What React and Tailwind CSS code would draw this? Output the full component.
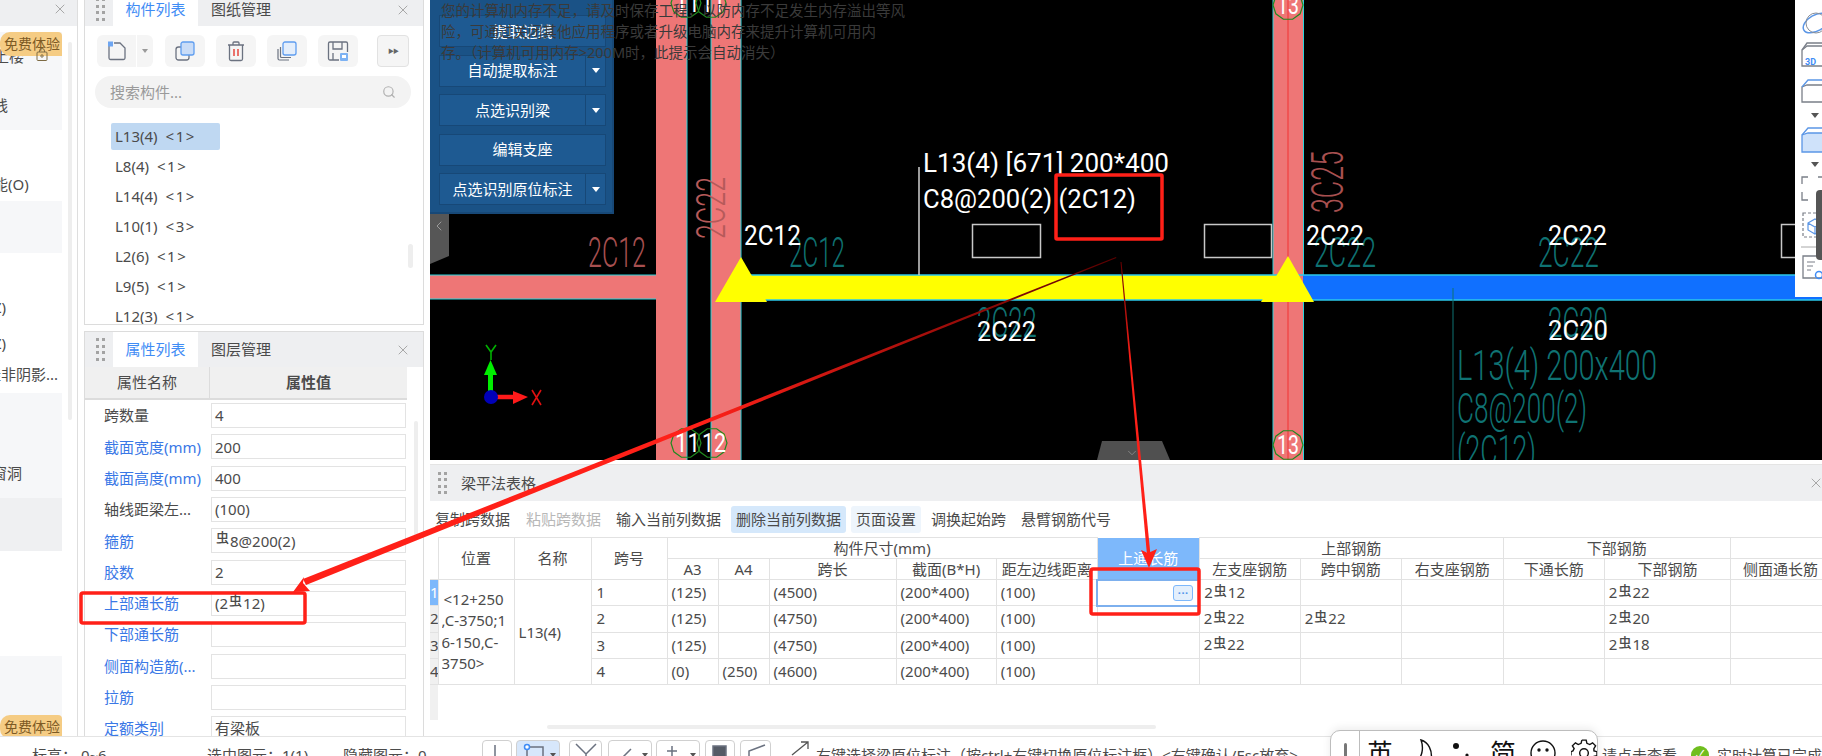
import { X, Search, ChevronLeft, ChevronDown } from "lucide-react";

const PINK = "#ee7676";
const CYAN = "#2bd4dc";
const TEAL = "#0f7272";
const DARK_PINK = "#a85050";

function Grip() {
    return (
        <div className="grid w-[9px] grid-cols-2 gap-x-[3px] gap-y-[3.5px]">
            {[0, 1, 2, 3, 4, 5, 6, 7].map((i) => (
                <span key={i} className="h-[3px] w-[3px] bg-[#a3a3a3]" />
            ))}
        </div>
    );
}

// 钢筋符号
function Bar() {
    return <span className="relative -top-[3px] mx-[1px] text-[13px] font-medium">虫</span>;
}

function PanelHeader({ active, other, height, lift = "" }) {
    return (
        <div className={`flex shrink-0 items-center bg-[#eeeff1] ${height}`}>
            <div className={`flex w-[28px] justify-center pl-[3px] ${lift}`}>
                <Grip />
            </div>
            <div className={`flex h-full w-[85px] items-center justify-center bg-white text-[15px] text-[#3f8cf5] ${lift}`}>{active}</div>
            <div className={`ml-[13px] text-[15px] text-[#4b4b4b] ${lift}`}>{other}</div>
            <div className={`ml-auto mr-[12px] ${lift}`}>
                <X className="h-[16px] w-[16px] text-[#a8a8a8]" strokeWidth={1.5} />
            </div>
        </div>
    );
}

function ToolBtn({ children, w = "w-[40px]" }) {
    return <div className={`flex h-[32px] items-center justify-center rounded-[6px] bg-[#f5f5f5] ${w}`}>{children}</div>;
}

function LeftStub() {
    const Badge = () => (
        <div className="absolute left-0 w-[62px] overflow-hidden whitespace-nowrap rounded-l-[10px] rounded-tr-[4px] bg-[#f5cc84] pl-[4px] text-[14px] leading-[24px] text-[#7d5a24]">
            免费体验
        </div>
    );
    return (
        <div className="relative flex w-[78px] shrink-0 flex-col border-r border-[#dedede] text-[15px] text-[#4b4b4b]">
            <div className="flex h-[26px] shrink-0 justify-end bg-[#eeeff1] pr-[9px] pt-[1px]">
                <X className="h-[16px] w-[16px] text-[#a8a8a8]" strokeWidth={1.5} />
            </div>
            <div className="flex">
                <div className="w-[62px] overflow-hidden">
                    <div className="h-[6px]" />
                    <div className="h-[98px] bg-[#f6f7f9] pt-[12px]">
                        <div className="-ml-[6px] h-[24px] leading-[24px]">上楼</div>
                        <div className="-ml-[7px] mt-[26px]">线</div>
                    </div>
                    <div className="h-[71px] pt-[44px]">
                        <div className="-ml-[7px] whitespace-nowrap leading-[20px]">能(O)</div>
                    </div>
                    <div className="h-[52px] bg-[#f6f7f9]" />
                    <div className="h-[140px] pt-[44px]">
                        <div className="-ml-[7px] leading-[20px]">Z)</div>
                        <div className="-ml-[7px] mt-[16px] leading-[20px]">Z)</div>
                        <div className="-ml-[14px] mt-[11px] whitespace-nowrap leading-[20px]">挂非阴影...</div>
                    </div>
                    <div className="h-[105px] bg-[#f6f7f9] pt-[70px]">
                        <div className="-ml-[8px] whitespace-nowrap leading-[20px]">窗洞</div>
                    </div>
                    <div className="h-[53px] bg-[#eff0f2]" />
                    <div className="h-[105px]" />
                    <div className="h-[80px] bg-[#f6f7f9]" />
                </div>
                <div className="ml-[6px] mt-[16px] h-[378px] w-[4px] rounded-full bg-[#eeeeee]" />
            </div>
            <div className="absolute top-[32px] left-0 w-[62px]">
                <Badge />
            </div>
            <div className="absolute top-[715px] left-0 h-[21px] w-[62px] overflow-hidden">
                <Badge />
            </div>
            <svg className="absolute top-[48px] left-[36px]" width="12" height="13" viewBox="0 0 12 13" fill="none" stroke="#7d6a44" strokeWidth="1">
                <path d="M3.5 4V3a2.5 2.5 0 0 1 5 0v1" />
                <rect x="1" y="4" width="10" height="8.5" rx="1" />
                <circle cx="6" cy="8" r="1.2" />
            </svg>
        </div>
    );
}

function ComponentPanel() {
    const items = ["L13(4)|<1>", "L8(4)|<1>", "L14(4)|<1>", "L10(1)|<3>", "L2(6)|<1>", "L9(5)|<1>", "L12(3)|<1>"];
    return (
        <div className="relative flex h-[325px] flex-col overflow-hidden border-x border-b border-[#dcdcdc]">
            <PanelHeader active="构件列表" other="图纸管理" height="h-[26px]" lift="pb-[7px]" />
            <div className="ml-[12px] mt-[9px] flex shrink-0">
                <div className="flex h-[32px] w-[56px] rounded-[6px] bg-[#f5f5f5]">
                    <div className="flex w-[40px] items-center justify-center border-r border-white">
                        <svg width="22" height="22" viewBox="0 0 22 22" fill="none" stroke="#6b7280" strokeWidth="1.3">
                            <path d="M3 6v12a1.5 1.5 0 0 0 1.5 1.5h13A1.5 1.5 0 0 0 19 18V8l-5-5H8" />
                            <rect x="2" y="1.5" width="5" height="5" fill="#6ea6f2" stroke="none" />
                        </svg>
                    </div>
                    <div className="flex flex-1 items-center justify-center">
                        <span className="h-0 w-0 border-x-[3.5px] border-t-[4px] border-x-transparent border-t-[#9a9a9a]" />
                    </div>
                </div>
                <div className="ml-[12px] flex gap-[11px]">
                    <ToolBtn>
                        <svg width="22" height="22" viewBox="0 0 22 22" fill="none">
                            <rect x="2" y="7" width="13" height="13" rx="2.5" stroke="#6b7280" strokeWidth="1.3" />
                            <rect x="7" y="2" width="13" height="13" rx="2" fill="#c9dcf7" stroke="#5f9df0" strokeWidth="1.3" />
                        </svg>
                    </ToolBtn>
                    <ToolBtn>
                        <svg width="20" height="22" viewBox="0 0 20 22" fill="none" stroke="#6b7280" strokeWidth="1.3">
                            <path d="M2 5h16M7 5V3a1 1 0 0 1 1-1h4a1 1 0 0 1 1 1v2M3.5 5v14a1.5 1.5 0 0 0 1.5 1.5h10a1.5 1.5 0 0 0 1.5-1.5V5" />
                            <path d="M8 9v7M12 9v7" stroke="#e8524a" strokeWidth="1.6" />
                        </svg>
                    </ToolBtn>
                    <ToolBtn>
                        <svg width="22" height="22" viewBox="0 0 22 22" fill="none">
                            <path d="M2 9v9.5a1.5 1.5 0 0 0 1.5 1.5H13M4.5 7v9.5a1 1 0 0 0 1 1H15" stroke="#6b7280" strokeWidth="1.2" />
                            <rect x="7" y="2" width="13" height="13" rx="2" fill="#e4eefb" stroke="#5f9df0" strokeWidth="1.3" />
                        </svg>
                    </ToolBtn>
                    <ToolBtn>
                        <svg width="22" height="22" viewBox="0 0 22 22" fill="none">
                            <path d="M12 20H3a1.5 1.5 0 0 1-1.5-1.5v-15A1.5 1.5 0 0 1 3 2h16a1.5 1.5 0 0 1 1.5 1.5V12M6 2v7h9V2M6 20v-7" stroke="#6b7280" strokeWidth="1.3" />
                            <rect x="13" y="13" width="8" height="8" rx="1" fill="#7db2f3" />
                            <rect x="15" y="15" width="4" height="3" fill="#ffffff" />
                        </svg>
                    </ToolBtn>
                </div>
                <div className="ml-[19px] flex h-[32px] w-[32px] items-center justify-center rounded-[4px] border border-[#e2e2e2] bg-[#f5f5f5] text-[6px] tracking-[-1px] text-[#666]">
                    ▶▶
                </div>
            </div>
            <div className="ml-[10px] mt-[9px] flex h-[32px] w-[316px] shrink-0 items-center rounded-full bg-[#f3f3f3] pl-[15px] pr-[15px] text-[15px] text-[#9a9a9a]">
                搜索构件...
                <Search className="ml-auto h-[14px] w-[14px] text-[#b0b0b0]" strokeWidth={2} />
            </div>
            <div className="ml-[26px] mt-[13px] shrink-0">
                {items.map((item, i) => {
                    const [name, count] = item.split("|");
                    return (
                        <div key={item} className="flex h-[30px] items-center">
                            <div className={`flex h-[27px] w-[109px] items-center rounded-[2px] pl-[4px] text-[15px] text-[#4b4b4b] ${i === 0 ? "bg-[#bfd8f2]" : ""}`}>
                                {name}
                                <span className="ml-[8px] tracking-[1.5px]">{count}</span>
                            </div>
                        </div>
                    );
                })}
            </div>
            <div className="absolute top-[244px] right-[10px] h-[24px] w-[5px] rounded-full bg-[#eeeeee]" />
        </div>
    );
}

function PropertyPanel() {
    const rows = [
        ["跨数量", "4", false],
        ["截面宽度(mm)", "200", true],
        ["截面高度(mm)", "400", true],
        ["轴线距梁左...", "(100)", false],
        ["箍筋", "bar8", true],
        ["胶数", "2", true],
        ["上部通长筋", "bar12", true],
        ["下部通长筋", "", true],
        ["侧面构造筋(...", "", true],
        ["拉筋", "", true],
        ["定额类别", "有梁板", true],
    ];
    return (
        <div className="relative mt-[6px] flex h-[405px] flex-col overflow-hidden border border-b-0 border-[#dcdcdc]">
            <PanelHeader active="属性列表" other="图层管理" height="h-[35px]" />
            <div className="flex h-[33px] w-[322px] shrink-0 items-center border-b-2 border-[#dcdcdc] bg-[#f0f0f0] text-[15px] text-[#4b4b4b]">
                <div className="flex h-full w-[125px] items-center justify-center border-r border-[#dcdcdc]">属性名称</div>
                <div className="flex flex-1 items-center justify-center font-semibold">属性值</div>
            </div>
            {rows.map(([label, value, link]) => (
                <div key={label} className="flex h-[31.3px] shrink-0 items-center text-[15px]">
                    <div className={`w-[126px] whitespace-nowrap pl-[19px] ${link ? "text-[#3a78e6]" : "text-[#4b4b4b]"}`}>{label}</div>
                    <div className="flex h-[25px] w-[195px] items-center border border-[#e3e3e3] pl-[3px] text-[#4b4b4b]">
                        {value === "bar8" ? (
                            <>
                                <Bar />8@200(2)
                            </>
                        ) : value === "bar12" ? (
                            <>
                                (2
                                <Bar />
                                12)
                            </>
                        ) : (
                            value
                        )}
                    </div>
                </div>
            ))}
            <div className="absolute top-[89px] right-[5px] h-[115px] w-[4px] rounded-full bg-[#eeeeee]" />
        </div>
    );
}

function CadText({ x, y, w, size, fill, children, weight = 400 }) {
    return (
        <text x={x} y={y} fontSize={size} fill={fill} fontWeight={weight} textLength={w} lengthAdjust="spacingAndGlyphs" fontFamily="Roboto, sans-serif">
            {children}
        </text>
    );
}

function AxisMark({ cx, cy, r, label, x, w }) {
    const pts = [];
    for (let i = 0; i < 10; i++) {
        const a = (Math.PI * 2 * i) / 10;
        pts.push(`${cx + r * Math.cos(a)},${cy + r * Math.sin(a)}`);
    }
    return (
        <>
            <polygon points={pts.join(" ")} fill="none" stroke="#1f8a1f" strokeWidth="1.2" />
            <CadText x={x} y={cy + 9} w={w} size={25} fill="#ffffff">
                {label}
            </CadText>
        </>
    );
}

function CadDrawing() {
    return (
        <svg className="absolute inset-0" width="1392" height="460" viewBox="430 0 1392 460">
            <rect x="430" y="0" width="1392" height="460" fill="#000000" />

            {/* 柱和左侧梁 */}
            <rect x="430" y="275" width="226" height="24" fill={PINK} />
            <rect x="656" y="0" width="31" height="460" fill={PINK} />
            <rect x="711" y="0" width="30" height="460" fill={PINK} />
            <rect x="1273" y="0" width="30.5" height="460" fill={PINK} />
            <path d="M430 275H656M430 299H656M687 0V460M711 0V460M741 0V460M1273 0V460M1303.5 0V460" stroke={CYAN} strokeWidth="1" />
            <path d="M1288 0V460" stroke="#f04a4a" strokeWidth="1.5" />

            {/* 当前梁 */}
            <rect x="1303" y="275" width="519" height="25" fill="#1070ff" />
            <rect x="741" y="275" width="548" height="25" fill="#ffff00" />
            <path d="M741 275H1822M741 300H1822" stroke="#2bc8ea" strokeWidth="1.5" />
            <polygon points="741,257 767,302 715,302" fill="#ffff00" />
            <polygon points="1288,256 1314,302 1261,302" fill="#ffff00" />
            <path d="M1453 288V460" stroke={TEAL} strokeWidth="1" />

            {/* 引线和截面框 */}
            <path d="M919 167V275" stroke="#d0d0d0" strokeWidth="1.5" />
            <rect x="972.5" y="224.5" width="68" height="33" fill="none" stroke="#c8c8c8" strokeWidth="1.5" />
            <rect x="1204.5" y="224.5" width="67" height="33" fill="none" stroke="#c8c8c8" strokeWidth="1.5" />
            <rect x="1781.5" y="224.5" width="30" height="33" fill="none" stroke="#c8c8c8" strokeWidth="1.5" />

            {/* CAD底图文字 */}
            <CadText x={588} y={267} w={58} size={42} fill={DARK_PINK} weight={300}>2C12</CadText>
            <CadText x={789} y={267} w={56} size={42} fill={TEAL} weight={300}>2C12</CadText>
            <CadText x={1314} y={267} w={62} size={42} fill={TEAL} weight={300}>2C22</CadText>
            <CadText x={1538} y={267} w={61} size={42} fill={TEAL} weight={300}>2C22</CadText>
            <CadText x={977} y={337} w={60} size={42} fill={TEAL} weight={300}>2C22</CadText>
            <CadText x={1548} y={337} w={60} size={42} fill={TEAL} weight={300}>2C20</CadText>
            <CadText x={1457} y={380} w={200} size={42} fill={TEAL} weight={300}>L13(4) 200x400</CadText>
            <CadText x={1457} y={423} w={130} size={42} fill={TEAL} weight={300}>C8@200(2)</CadText>
            <CadText x={1457} y={465} w={79} size={42} fill={TEAL} weight={300}>(2C12)</CadText>
            <g transform="translate(725,239) rotate(-90)">
                <CadText x={0} y={0} w={62} size={41} fill="#b65a5a" weight={300}>2C22</CadText>
            </g>
            <g transform="translate(1343,213) rotate(-90)">
                <CadText x={0} y={0} w={62} size={44} fill={DARK_PINK} weight={300}>3C25</CadText>
            </g>

            {/* 软件标注文字 */}
            <CadText x={923} y={172} w={246} size={26} fill="#ffffff">L13(4) [671] 200*400</CadText>
            <CadText x={923} y={208} w={213} size={26} fill="#ffffff">C8@200(2) (2C12)</CadText>
            <CadText x={744} y={245} w={57} size={27} fill="#ffffff">2C12</CadText>
            <CadText x={1306} y={245} w={58} size={27} fill="#ffffff">2C22</CadText>
            <CadText x={1548} y={245} w={59} size={27} fill="#ffffff">2C22</CadText>
            <CadText x={977} y={341} w={59} size={27} fill="#ffffff">2C22</CadText>
            <CadText x={1548} y={340} w={60} size={27} fill="#ffffff">2C20</CadText>

            {/* 轴号 */}
            <AxisMark cx={686} cy={3} r={15} label="11" x={675} w={25} />
            <AxisMark cx={711} cy={3} r={15} label="11" x={701} w={24} />
            <AxisMark cx={686} cy={443} r={15} label="11" x={675} w={25} />
            <AxisMark cx={712} cy={443} r={15} label="12" x={702} w={24} />
            <AxisMark cx={1288} cy={5} r={15} label="13" x={1277} w={22} />
            <AxisMark cx={1288} cy={445} r={15} label="13" x={1277} w={22} />

            {/* 坐标系 */}
            <path d="M490.5 392V372" stroke="#00ee00" strokeWidth="5" />
            <polygon points="490.5,360 497,375 484,375" fill="#00ee00" />
            <path d="M496 397H515" stroke="#ff1a1a" strokeWidth="4.5" />
            <polygon points="528,397 513,391 513,404" fill="#ff1a1a" />
            <circle cx="491" cy="397" r="7" fill="#0000b8" />
            <path d="M486 345L491 352L496 345M491 352V360" stroke="#00b000" strokeWidth="1.6" fill="none" />
            <path d="M532 390L541 405M541 390L532 405" stroke="#e01010" strokeWidth="1.6" fill="none" />

            {/* 折叠手柄 */}
            <polygon points="430,193 443,188 449,196 449,256 430,264" fill="#565656" />
            <polygon points="1097,460 1102,441 1162,441 1170,460" fill="#505050" />
        </svg>
    );
}

function SidePanelButton({ label, menu = true }) {
    return (
        <div className="flex h-[32px] w-[167px] shrink-0 items-center border border-[#174877] bg-[#1e5a92] text-[15px] text-white">
            <div className="flex-1 text-center">{label}</div>
            {menu && (
                <div className="flex h-full w-[20px] items-center justify-center border-l border-[#174877]">
                    <span className="h-0 w-0 border-x-[4.5px] border-t-[5px] border-x-transparent border-t-white" />
                </div>
            )}
        </div>
    );
}

function RightTools() {
    return (
        <div className="absolute top-0 right-0 h-[297px] w-[27px] bg-white">
            <svg width="27" height="297" viewBox="1795 0 27 297" fill="none">
                <ellipse cx="1816" cy="23" rx="14" ry="8" stroke="#5b96e6" strokeWidth="1.5" transform="rotate(-30 1816 23)" />
                <circle cx="1816" cy="23" r="10" stroke="#8a8f98" strokeWidth="1" />
                <path d="M1802 50V66H1825V46H1807Z" stroke="#7a7f88" strokeWidth="1.3" />
                <path d="M1802 50L1807 43H1825" stroke="#7a7f88" strokeWidth="1.3" />
                <text x="1805" y="65" fontSize="9" fontWeight="700" fill="#3f8cf5" fontFamily="Roboto, sans-serif">3D</text>
                <path d="M1802 87V102H1825V85H1807Z" stroke="#7a7f88" strokeWidth="1.3" />
                <path d="M1802 87L1808 80H1825" stroke="#5b96e6" strokeWidth="1.3" />
                <polygon points="1811,113 1819,113 1815,118" fill="#555" />
                <path d="M1802 135V152H1825V133H1808Z" fill="#cfe2fa" stroke="#5b96e6" strokeWidth="1.3" />
                <path d="M1802 135L1808 128H1825" stroke="#5b96e6" strokeWidth="1.3" />
                <polygon points="1811,162 1819,162 1815,167" fill="#555" />
                <path d="M1802 184V177H1808M1802 192V200H1808M1818 177H1825" stroke="#7a7f88" strokeWidth="1.3" />
                <rect x="1803" y="213" width="20" height="24" stroke="#7a7f88" strokeWidth="1.2" strokeDasharray="3 2" />
                <path d="M1808 223L1815 219L1822 223V230L1815 234L1808 230ZM1808 223L1815 227L1822 223M1815 227V234" stroke="#5b96e6" strokeWidth="1.2" />
                <path d="M1801 247H1822" stroke="#a8a8a8" strokeWidth="1" />
                <path d="M1803 256H1825V278H1803Z" stroke="#7a7f88" strokeWidth="1.3" />
                <path d="M1807 262H1815M1807 266H1813M1807 270H1811" stroke="#7a7f88" strokeWidth="1.2" />
                <circle cx="1819" cy="275" r="3.5" stroke="#3f8cf5" strokeWidth="1.5" />
            </svg>
            <div className="absolute top-[190px] right-0 h-[70px] w-[6px] rounded-l-[4px] bg-[#555555]" />
        </div>
    );
}

function Canvas() {
    return (
        <div className="relative h-[460px] shrink-0 overflow-hidden bg-black">
            <CadDrawing />
            <div className="absolute top-0 left-0 flex h-[214px] w-[184px] flex-col gap-[7.5px] border-r-2 border-b-2 border-[#174877] bg-[#1a5286] pl-[9px] pt-[15px]">
                <SidePanelButton label="提取边线" menu={false} />
                <SidePanelButton label="自动提取标注" />
                <SidePanelButton label="点选识别梁" />
                <SidePanelButton label="编辑支座" menu={false} />
                <SidePanelButton label="点选识别原位标注" />
            </div>
            <ChevronLeft className="absolute top-[218px] left-[1px] h-[16px] w-[16px] text-[#9a9a9a]" strokeWidth={1.5} />
            <ChevronDown className="absolute top-[446px] left-[695px] h-[14px] w-[14px] text-[#8a8a8a]" strokeWidth={1.5} />
            <div className="absolute top-0 left-[11px] whitespace-nowrap text-[14.5px] leading-[21px] text-[#3a3a3a]">
                <div>您的计算机内存不足，请及时保存工程，以防内存不足发生内存溢出等风</div>
                <div>险，可通过关闭其他应用程序或者升级电脑内存来提升计算机可用内</div>
                <div>存。（计算机可用内存&gt;200M时，此提示会自动消失）</div>
            </div>
            <RightTools />
        </div>
    );
}

const COLS = [8, 76, 77, 76, 51, 51, 127, 100, 101, 102, 101, 101, 102, 101, 126, 100];

const SPANS = [
    ["1", "(125)", "", "(4500)", "(200*400)", "(100)", "", "2|12", "", "", "", "2|22", ""],
    ["2", "(125)", "", "(4750)", "(200*400)", "(100)", "", "2|22", "2|22", "", "", "2|20", ""],
    ["3", "(125)", "", "(4750)", "(200*400)", "(100)", "", "2|22", "", "", "", "2|18", ""],
    ["4", "(0)", "(250)", "(4600)", "(200*400)", "(100)", "", "", "", "", "", "", ""],
];

function Cell({ value }) {
    if (value.includes("|")) {
        const [n, d] = value.split("|");
        return (
            <>
                {n}
                <Bar />
                {d}
            </>
        );
    }
    return value;
}

function BeamTable() {
    const td = "overflow-hidden whitespace-nowrap border border-[#e2e2e2] px-[4px]";
    const th = "overflow-hidden whitespace-nowrap border border-[#e2e2e2] text-center font-normal";
    return (
        <div className="h-[148px] shrink-0 overflow-hidden">
            <table className="w-[1401px] table-fixed border-collapse text-[15px] leading-[19px] text-[#4b4b4b]">
                <colgroup>
                    {COLS.map((w, i) => (
                        <col key={i} style={{ width: w }} />
                    ))}
                </colgroup>
                <thead>
                    <tr className="h-[21px]">
                        <th rowSpan={2} className="bg-white" />
                        <th rowSpan={2} className={th}>位置</th>
                        <th rowSpan={2} className={th}>名称</th>
                        <th rowSpan={2} className={th}>跨号</th>
                        <th colSpan={5} className={th}>构件尺寸(mm)</th>
                        <th rowSpan={2} className="overflow-hidden whitespace-nowrap bg-[#7db8fb] text-center font-normal text-white">上通长筋</th>
                        <th colSpan={3} className={th}>上部钢筋</th>
                        <th colSpan={2} className={th}>下部钢筋</th>
                        <th className={th} />
                    </tr>
                    <tr className="h-[21px]">
                        {["A3", "A4", "跨长", "截面(B*H)", "距左边线距离", "左支座钢筋", "跨中钢筋", "右支座钢筋", "下通长筋", "下部钢筋", "侧面通长筋"].map((t) => (
                            <th key={t} className={th}>{t}</th>
                        ))}
                    </tr>
                </thead>
                <tbody>
                    {SPANS.map((row, i) => (
                        <tr key={row[0]} className="h-[26px]">
                            <td className={`overflow-hidden border-y border-[#e2e2e2] text-right leading-none ${i === 0 ? "bg-[#7db8fb] text-white" : "bg-[#f0f0f0]"}`}>
                                <span className="-mr-[1px] block">{row[0]}</span>
                            </td>
                            {i === 0 && (
                                <>
                                    <td rowSpan={4} className="border border-[#e2e2e2] p-0 pl-[3px]">
                                        <div className="h-[104px] overflow-hidden whitespace-nowrap pt-[9px] leading-[21.3px]">
                                            <div className="pl-[2px]">&lt;12+250</div>
                                            <div>,C-3750;1</div>
                                            <div>6-150,C-</div>
                                            <div>3750&gt;</div>
                                        </div>
                                    </td>
                                    <td rowSpan={4} className="border border-[#e2e2e2] px-[4px]">L13(4)</td>
                                </>
                            )}
                            {row.map((v, j) =>
                                j === 6 && i === 0 ? (
                                    <td key={j} className="border-2 border-[#7db0ee] p-0">
                                        <div className="flex justify-end pr-[5px]">
                                            <div className="flex h-[16px] w-[20px] items-center justify-center rounded-[3px] border border-[#7db8fb] bg-[#e3effc] text-[11px] font-bold leading-none tracking-[0.5px] text-[#4f93ea]">
                                                ···
                                            </div>
                                        </div>
                                    </td>
                                ) : (
                                    <td key={j} className={`${td} ${j === 0 ? "pl-[5px]" : ""}`}>
                                        <Cell value={v} />
                                    </td>
                                )
                            )}
                        </tr>
                    ))}
                </tbody>
            </table>
        </div>
    );
}

function TablePanel() {
    const actions = [
        ["复制跨数据", ""],
        ["粘贴跨数据", "text-[#b8b8b8] ml-px"],
        ["输入当前列数据", ""],
        ["删除当前列数据", "bg-[#d5e8fb]"],
        ["页面设置", "bg-[#eef5fc]"],
        ["调换起始跨", ""],
        ["悬臂钢筋代号", ""],
    ];
    return (
        <div className="flex h-[271px] flex-col overflow-hidden">
            <div className="flex h-[36px] shrink-0 items-center bg-[#eeeff1] pl-[8px] text-[15px] text-[#4b4b4b]">
                <Grip />
                <span className="ml-[14px]">梁平法表格</span>
                <X className="ml-auto mr-[-2px] h-[16px] w-[16px] text-[#a8a8a8]" strokeWidth={1.5} />
            </div>
            <div className="flex h-[36px] shrink-0 items-center gap-[5px] text-[15px] text-[#4b4b4b]">
                {actions.map(([label, cls]) => (
                    <div key={label} className={`flex h-[27px] items-center rounded-[3px] px-[5px] ${cls}`}>
                        {label}
                    </div>
                ))}
            </div>
            <BeamTable />
            <div className="h-[35px] w-[8px] shrink-0 bg-[#f0f0f0]" />
            <div className="ml-[117px] mt-[5px] h-[4px] w-[609px] shrink-0 rounded-full bg-[#eeeeee]" />
        </div>
    );
}

function StatusBar() {
    const tools = [
        ["w-[30px]", "M12 4V22M12 22H24", false],
        ["ml-[4px] w-[44px] border-[#6fa8ef] bg-[#d7e7fb]", "M10 6H26V22H10Z", false],
        ["ml-[9px] w-[33px]", "M6 3L16 13L26 3M16 13V24", false],
        ["ml-[6px] w-[44px]", "M10 20L22 8", false],
        ["ml-[4px] w-[44px]", "M10 10H20M15 5V15", false],
        ["ml-[5px] w-[30px]", "M7 5H20V22H7Z", true],
        ["ml-[5px] w-[31px]", "M8 20V10L24 4", false],
    ];
    return (
        <div className="flex h-[20px] shrink-0 overflow-hidden border-t border-[#e4e4e4] text-[15px] leading-[20px] text-[#4b4b4b]">
            <div className="flex w-[482px] shrink-0 whitespace-nowrap pl-[32px] pt-[8px]">
                <div className="w-[175px]">标高：&nbsp;0~6</div>
                <div className="w-[136px]">选中图元：1(1)</div>
                <div>隐藏图元：0</div>
            </div>
            <div className="flex w-[289px] shrink-0 pt-[3px]">
                {tools.map(([cls, d, filled], i) => (
                    <div key={i} className={`relative h-[30px] shrink-0 rounded-[4px] border border-[#d0d0d0] ${cls}`}>
                        <svg width="30" height="28" fill={filled ? "#555b66" : "none"} stroke="#6b7280" strokeWidth="1.5">
                            <path d={d} />
                            {i === 1 && <circle cx="10" cy="6" r="2.5" fill="#ffffff" stroke="#3f8cf5" />}
                        </svg>
                        {(i === 1 || i === 3 || i === 4) && (
                            <span className="absolute top-[12px] right-[3px] h-0 w-0 border-x-[3.5px] border-t-[4px] border-x-transparent border-t-[#555]" />
                        )}
                    </div>
                ))}
            </div>
            <svg className="ml-[19px] mt-[2px] shrink-0" width="20" height="18" fill="none" stroke="#555" strokeWidth="1.3">
                <path d="M2 16L18 3M11 3H18V10" />
            </svg>
            <div className="ml-[6px] w-[786px] shrink-0 whitespace-nowrap pt-[8px]">右键选择梁原位标注（按ctrl+右键切换原位标注框）&lt;右键确认/Esc放弃&gt;</div>
            <div className="w-[89px] shrink-0 whitespace-nowrap pt-[8px]">请点击查看</div>
            <div className="mt-[9px] flex h-[18px] w-[18px] shrink-0 items-center justify-center rounded-full bg-[#6fbe1e] text-[12px] text-white">✓</div>
            <div className="ml-[8px] whitespace-nowrap pt-[8px]">实时计算已完成</div>
        </div>
    );
}

function ImeBar() {
    return (
        <div className="absolute top-[730px] left-[1330px] flex h-[40px] w-[268px] rounded-t-[10px] border border-[#bdbdbd] bg-white text-[26px] leading-[26px] text-[#111] shadow-[0_-2px_8px_rgba(0,0,0,0.08)]">
            <div className="flex w-[29px] justify-center border-r border-[#bdbdbd] pt-[12px]">
                <span className="h-[20px] w-[3px] rounded bg-[#777]" />
            </div>
            <span className="ml-[7px] mt-[9px]">英</span>
            <svg className="ml-[22px] mt-[8px]" width="20" height="26" fill="none" stroke="#111" strokeWidth="1.4">
                <path d="M6 1C13 3 18 11 16 22C13 24 6 25 2 22C7 18 9 9 6 1Z" />
            </svg>
            <svg className="ml-[17px] mt-[12px]" width="18" height="16" fill="#111">
                <circle cx="4" cy="3" r="3" />
                <circle cx="15" cy="12" r="1.6" />
            </svg>
            <span className="ml-[20px] mt-[9px]">简</span>
            <svg className="ml-[14px] mt-[9px]" width="26" height="26" fill="none" stroke="#111" strokeWidth="1.4">
                <circle cx="13" cy="13" r="12" />
                <circle cx="9" cy="10" r="1" fill="#111" />
                <circle cx="17" cy="10" r="1" fill="#111" />
            </svg>
            <svg className="ml-[15px] mt-[8px]" width="26" height="26" viewBox="0 0 24 24" fill="none" stroke="#111" strokeWidth="1.3">
                <path d="M10 1h4l.7 3 2.6 1.1 2.6-1.6 2.8 2.8-1.6 2.6L21.2 11l2.8.7v3.6l-2.8.7-1.1 2.6 1.6 2.6-2.8 2.8" />
                <path d="M10 1l-.7 3-2.6 1.1-2.6-1.6-2.8 2.8 1.6 2.6L1.8 11 0 11.7v3.6" />
                <circle cx="12" cy="13" r="4" />
            </svg>
        </div>
    );
}

function Annotations() {
    return (
        <svg className="pointer-events-none absolute inset-0" width="1822" height="756" fill="none">
            <defs>
                <linearGradient id="fade1" gradientUnits="userSpaceOnUse" x1="1116" y1="257" x2="700" y2="425">
                    <stop offset="0" stopColor="#5a0000" />
                    <stop offset="1" stopColor="#ff2018" />
                </linearGradient>
                <linearGradient id="fade2" gradientUnits="userSpaceOnUse" x1="1121" y1="262" x2="1131" y2="360">
                    <stop offset="0" stopColor="#6a0000" />
                    <stop offset="1" stopColor="#ff2018" />
                </linearGradient>
            </defs>
            <polygon points="1116,257 1116.4,258 306,585 303,579" fill="url(#fade1)" />
            <polygon points="293,592 304,577 303,583 310,591" fill="#ff2018" />
            <polygon points="1120.5,262 1121.5,262 1150.5,555 1147,555" fill="url(#fade2)" />
            <polygon points="1149,568 1141,550 1148,553 1157,549" fill="#ff2018" />
            <rect x="81" y="593" width="224" height="30" rx="2" stroke="#ff2018" strokeWidth="3.5" />
            <rect x="1091" y="569" width="108" height="45" rx="2" stroke="#ff2018" strokeWidth="3.5" />
            <rect x="1056" y="175" width="106" height="64" rx="1" stroke="#ff2018" strokeWidth="3.5" />
        </svg>
    );
}

export default function App() {
    return (
        <div className="relative flex h-[756px] w-[1822px] flex-col overflow-hidden bg-white font-['Noto_Sans','Noto_Sans_CJK_SC',sans-serif]">
            <div className="flex h-[736px] shrink-0">
                <LeftStub />
                <div className="ml-[6px] flex w-[340px] shrink-0 flex-col">
                    <ComponentPanel />
                    <PropertyPanel />
                </div>
                <div className="ml-[6px] flex min-w-0 flex-1 flex-col">
                    <Canvas />
                    <div className="h-[5px] shrink-0 border-b border-[#e4e4e4] bg-white" />
                    <TablePanel />
                </div>
            </div>
            <StatusBar />
            <ImeBar />
            <Annotations />
        </div>
    );
}
